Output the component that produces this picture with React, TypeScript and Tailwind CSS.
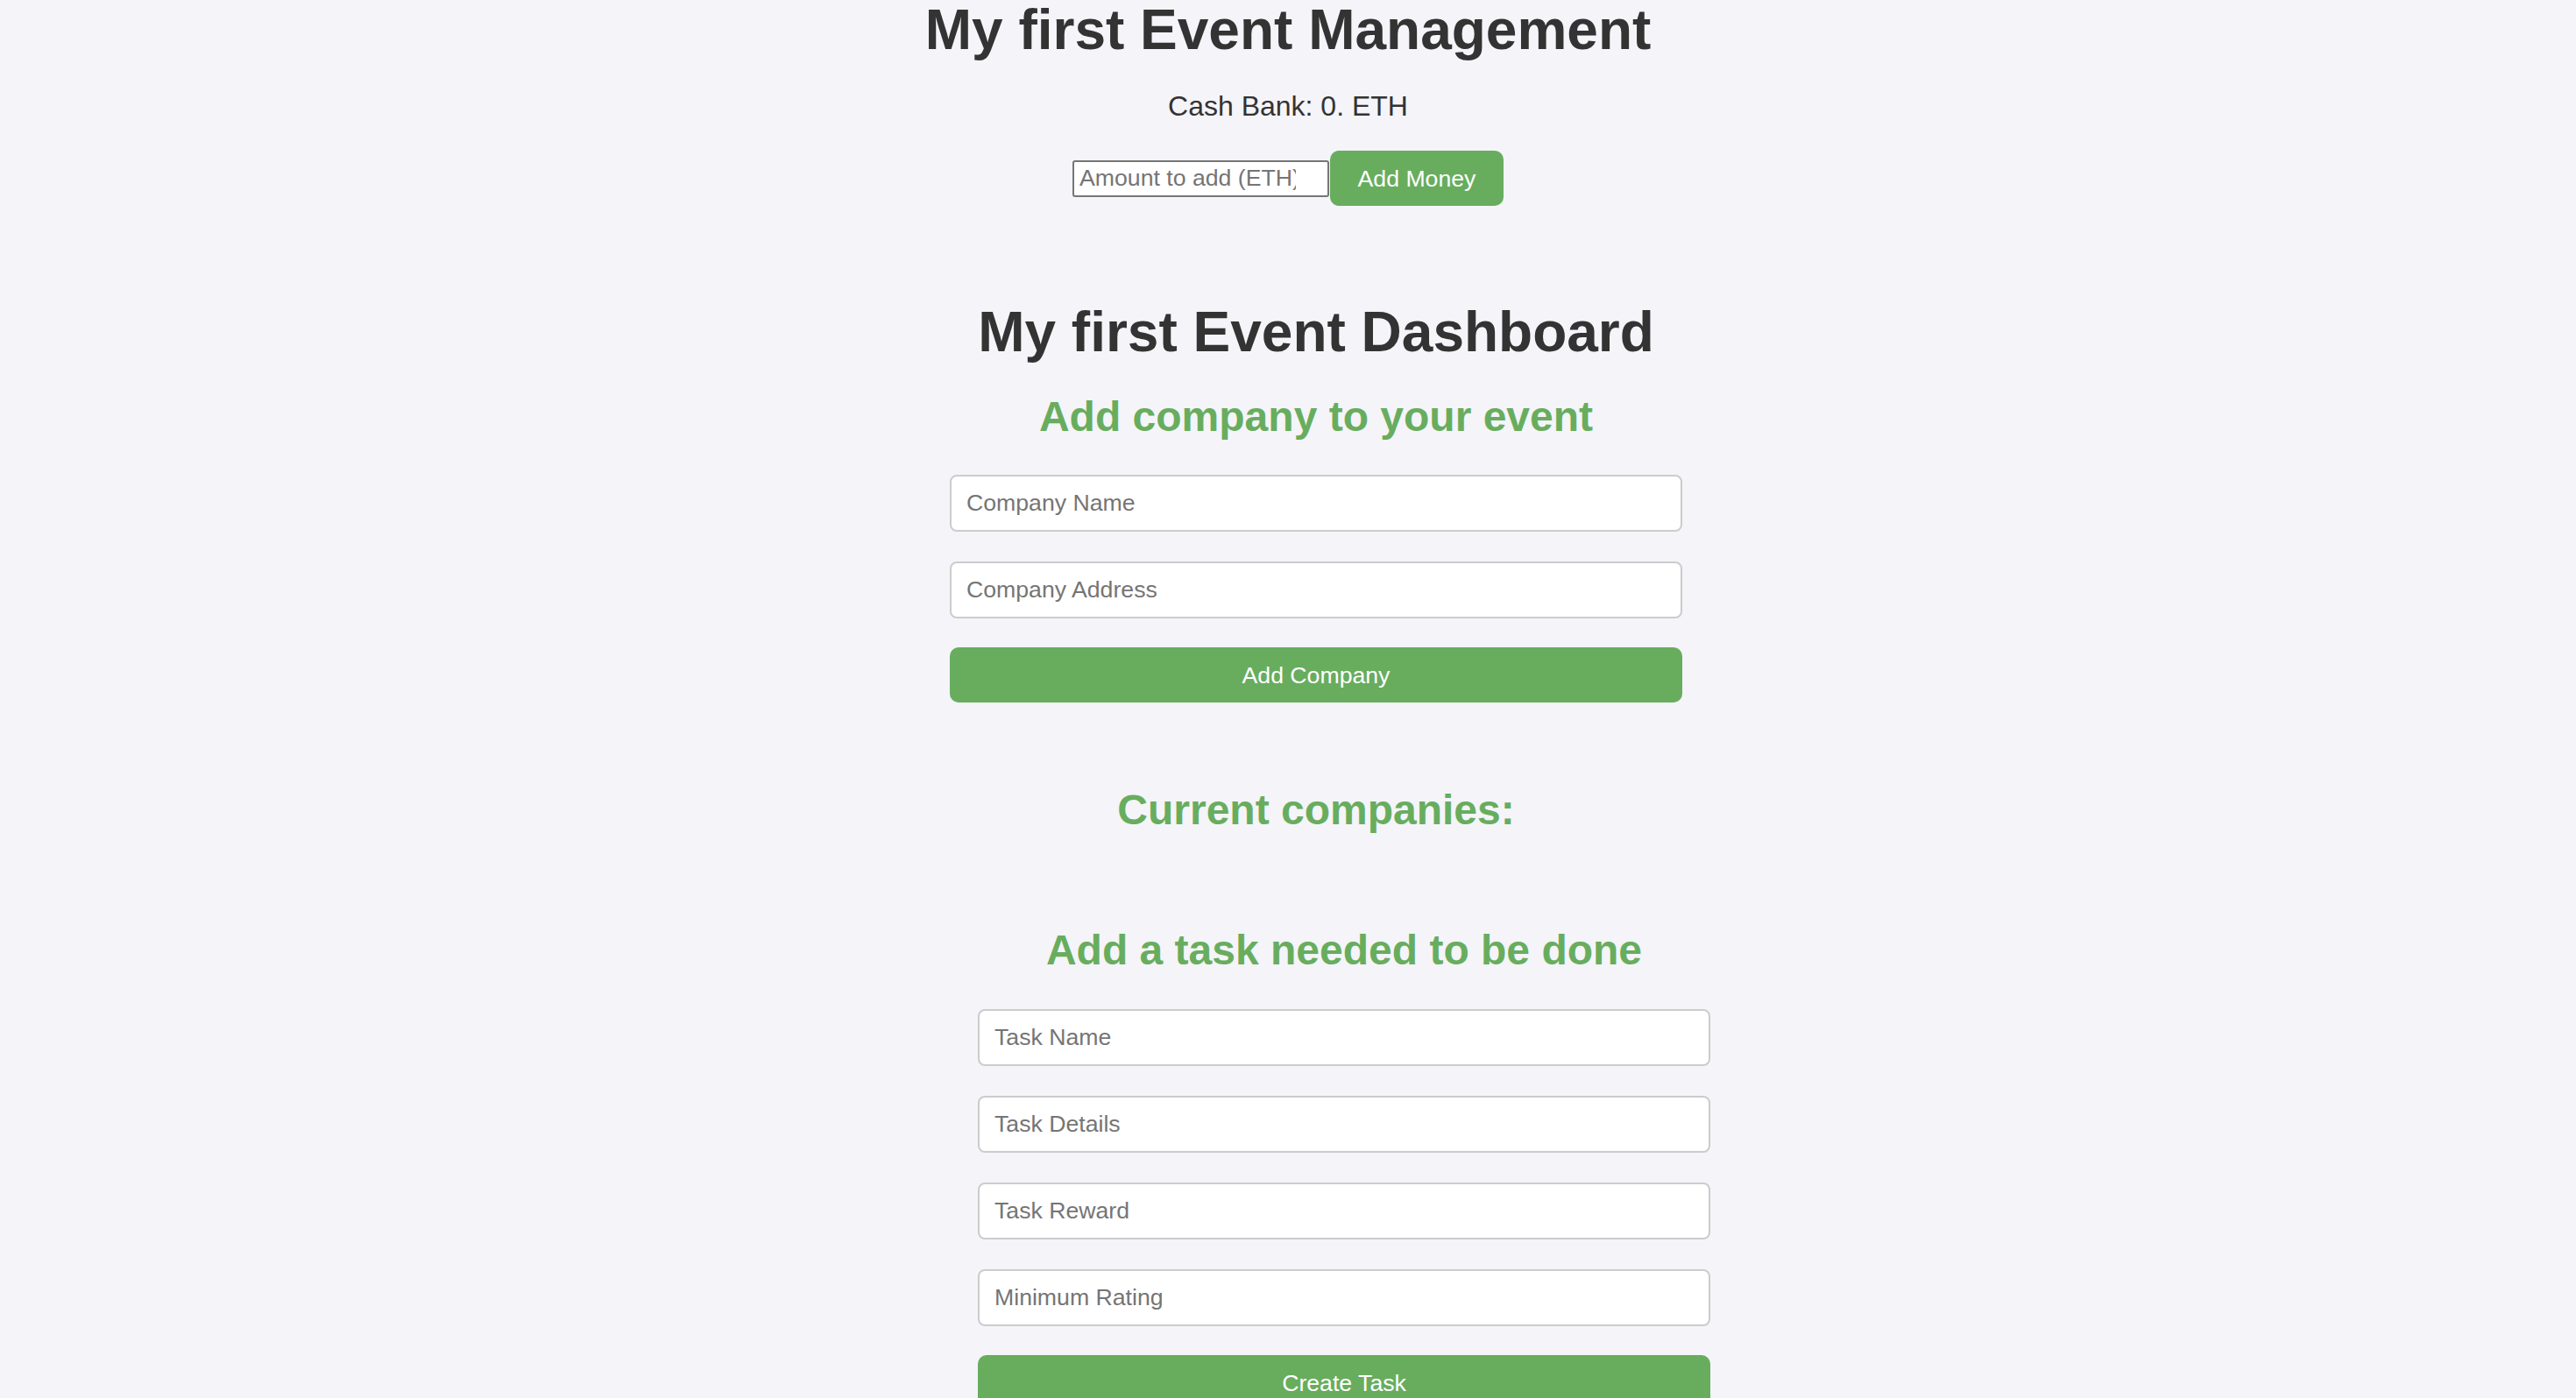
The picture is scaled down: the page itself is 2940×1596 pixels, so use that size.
import React, { useState } from 'react';

const inputCls =
  'block w-full h-[65px] border-2 border-[#cccccc] rounded-[8px] bg-white px-[17px] text-[26.67px] text-[#333] placeholder:text-[#757575] focus:outline-none';

const buttonCls =
  'block w-full h-[63px] rounded-[10px] bg-[#68ad5e] text-white text-[26.67px] hover:bg-[#5c9f52] transition-colors';

const App: React.FC = () => {
  const [amount, setAmount] = useState('');
  const [companyName, setCompanyName] = useState('');
  const [companyAddress, setCompanyAddress] = useState('');
  const [task, setTask] = useState({ name: '', details: '', reward: '', rating: '' });

  return (
    <div className="h-screen overflow-hidden bg-[#f4f4f9] text-[#333] font-['Liberation_Sans',Arial,sans-serif] flex flex-col items-center text-center">
      {/* Bank */}
      <h1 className="text-[64px] leading-[68px] font-bold">My first Event Management</h1>
      <p className="mt-[33px] text-[32px] leading-[40px]">Cash Bank: 0. ETH</p>
      <div className="mt-[31px] flex items-center justify-center">
        <input
          type="number"
          value={amount}
          onChange={(e) => setAmount(e.target.value)}
          placeholder="Amount to add (ETH)"
          className="w-[293px] h-[42px] border-2 border-[#767676] rounded-[3px] bg-white pl-[6px] pr-[21px] text-[26.67px] text-[#333] placeholder:text-[#757575] focus:outline-none"
        />
        <button className="ml-[1px] w-[198px] h-[63px] rounded-[10px] bg-[#68ad5e] text-white text-[26.67px]">
          Add Money
        </button>
      </div>

      {/* Dashboard */}
      <div className="w-full pl-[64px] flex flex-col items-center">
        <h1 className="mt-[112px] text-[64px] leading-[64px] font-bold">My first Event Dashboard</h1>
        <h2 className="mt-[37px] text-[48px] leading-[56px] font-bold text-[#68ad5e]">
          Add company to your event
        </h2>
        <div className="mt-[38px] w-[836px]">
          <input
            type="text"
            value={companyName}
            onChange={(e) => setCompanyName(e.target.value)}
            placeholder="Company Name"
            className={inputCls}
          />
          <input
            type="text"
            value={companyAddress}
            onChange={(e) => setCompanyAddress(e.target.value)}
            placeholder="Company Address"
            className={`mt-[34px] ${inputCls}`}
          />
          <button className={`mt-[33px] ${buttonCls}`}>Add Company</button>
        </div>

        <h2 className="mt-[95px] text-[48px] leading-[56px] font-bold text-[#68ad5e]">Current companies:</h2>

        {/* Tasks */}
        <div className="mt-[104px] w-full pl-[64px] flex flex-col items-center">
          <h2 className="text-[48px] leading-[56px] font-bold text-[#68ad5e]">Add a task needed to be done</h2>
          <div className="mt-[39px] w-[836px]">
            <input
              type="text"
              value={task.name}
              onChange={(e) => setTask({ ...task, name: e.target.value })}
              placeholder="Task Name"
              className={inputCls}
            />
            <input
              type="text"
              value={task.details}
              onChange={(e) => setTask({ ...task, details: e.target.value })}
              placeholder="Task Details"
              className={`mt-[34px] ${inputCls}`}
            />
            <input
              type="text"
              value={task.reward}
              onChange={(e) => setTask({ ...task, reward: e.target.value })}
              placeholder="Task Reward"
              className={`mt-[34px] ${inputCls}`}
            />
            <input
              type="text"
              value={task.rating}
              onChange={(e) => setTask({ ...task, rating: e.target.value })}
              placeholder="Minimum Rating"
              className={`mt-[34px] ${inputCls}`}
            />
            <button className={`mt-[33px] ${buttonCls}`}>Create Task</button>
          </div>
        </div>
      </div>
    </div>
  );
};

export default App;
